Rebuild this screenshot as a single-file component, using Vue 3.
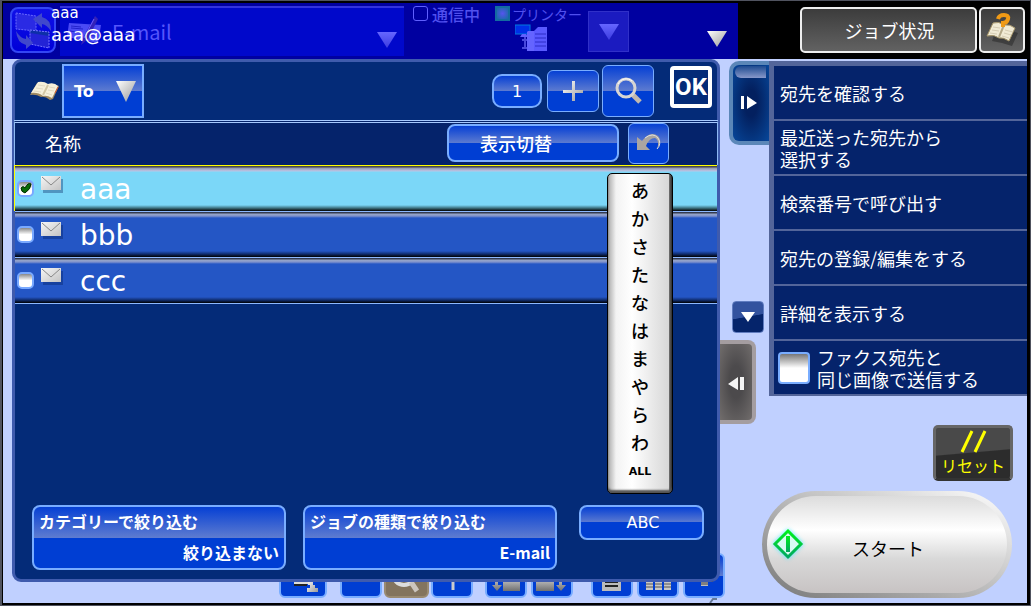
<script setup>
import { ref } from 'vue'

const addresses = ref([
  { name: 'aaa', checked: true },
  { name: 'bbb', checked: false },
  { name: 'ccc', checked: false },
])
const indexKeys = ['あ', 'か', 'さ', 'た', 'な', 'は', 'ま', 'や', 'ら', 'わ', 'ALL']
const actions = [
  ['宛先を確認する'],
  ['最近送った宛先から', '選択する'],
  ['検索番号で呼び出す'],
  ['宛先の登録/編集をする'],
  ['詳細を表示する'],
]
const sameImage = ref(false)
</script>

<template>
  <div class="screen">
    <svg class="defs" width="0" height="0" aria-hidden="true">
      <defs>
        <linearGradient id="silver" x1="0" y1="0" x2="1" y2="1">
          <stop offset="0" stop-color="#fff" /><stop offset="1" stop-color="#999" />
        </linearGradient>
        <linearGradient id="steel" x1="0" y1="0" x2="0" y2="1">
          <stop offset="0" stop-color="#c4c4c4" /><stop offset="1" stop-color="#707070" />
        </linearGradient>
        <linearGradient id="violet" x1="0" y1="0" x2="0" y2="1">
          <stop offset="0" stop-color="#6666ff" /><stop offset="1" stop-color="#3c3ce0" />
        </linearGradient>
        <linearGradient id="leaf" x1="0" y1="0" x2="0" y2="1">
          <stop offset="0" stop-color="#00f01c" /><stop offset="1" stop-color="#00a860" />
        </linearGradient>
      </defs>
    </svg>

    <header class="top">
      <div class="dest">
        <button class="swap" aria-label="切替">
          <svg width="42" height="42" viewBox="0 0 42 42">
            <path d="M4 4l20 3v15L4 20z" fill="#2a2ae4" />
            <path d="M4 4l20 3v15L4 20z" fill="none" stroke="#6a6aff" stroke-dasharray="2 1" />
            <path d="M18 21l19 2v16l-19-4z" fill="#2323d6" />
            <path d="M18 21l19 2v4l-19-3z" fill="#0d2fa8" />
            <path d="M18 21l19 2v16l-19-4z" fill="none" stroke="#7a7aff" stroke-dasharray="2 1" />
            <path d="M21 10l9-6v4q9 2 9 14q-4-6-9-7v4z" fill="#4048cc" />
            <path d="M4 22q4 7 10 8v-4l7 8l-7 6v-4Q5 34 4 22z" fill="#4048cc" />
          </svg>
        </button>
        <button class="mail-card">
          <svg width="36" height="34" viewBox="0 0 36 34">
            <path d="M2 8l32 2l-3 18l-31-6z" fill="#4a4af4" />
            <path d="M4 11l10 1M4 13l12 1M3 16l12 2M20 20l8 1" stroke="#2222cc" />
            <path d="M28 1L17 21l-3 9l7-6L31 4z" fill="#3422b8" /><path d="M27 4L17 23" stroke="#6a5aff" />
          </svg>
          <span>E-mail</span>
          <svg class="card-arrow" width="20" height="16"><path d="M0 0h20L10 16z" fill="url(#violet)" /></svg>
        </button>
        <div class="status">
          <div class="lamps">
            <span class="lamp"></span><span class="comm">通信中</span>
            <span class="lamp on"></span><span class="printer">プリンター</span>
          </div>
          <svg class="printer-icon" width="32" height="28" viewBox="0 0 32 28">
            <rect x="0" y="1" width="15" height="9" fill="#002fe8" stroke="#007bdd" />
            <path d="M5 13h8l-2-3H7z" fill="#6060ff" />
            <path d="M7 16h6M7 24h6M10 13v11" stroke="#4848dc" stroke-width="2" />
            <path d="M13 7h6v20h-7V8z" fill="#6464ff" />
            <path d="M19 7l4-4h9v24H19z" fill="#5959ff" />
            <path d="M20 10h11M20 14h11M20 18h11M20 22h11" stroke="#2c2cc8" />
          </svg>
          <button class="status-menu" aria-label="プリンター一覧">
            <svg width="20" height="16"><path d="M0 0h20L10 16z" fill="url(#violet)" /></svg>
          </button>
          <svg class="open-arrow" width="20" height="16"><path d="M0 0h20L10 16z" fill="url(#silver)" /></svg>
        </div>
        <div class="current"><span>aaa</span><strong>aaa@aaa</strong></div>
      </div>
      <div class="job">
        <button class="job-status">ジョブ状況</button>
        <button class="help" aria-label="ヘルプ">
          <svg width="36" height="36" viewBox="0 0 36 36">
            <path d="M8 29l5-13l9 1l12 4l-6 13l-10-3z" fill="#171717" opacity=".4" />
            <path d="M3 24L9 11q6-2 11 2q6-1 11 3l-6 13q-6-4-10-3q-5-4-12-2z" fill="#f1ebd5" stroke="#a49469" />
            <path d="M20 13l-5 12" stroke="#b4a989" stroke-width="2" />
            <path d="M9 15l7 1M8 18l7 1M6 21l7 1M21 18l8 2M20 21l7 2M18 24l7 2" stroke="#d6cdb4" />
            <path d="M14 7q1-4 6-4q5 0 4 4q-1 4-5 4v4" fill="none" stroke="#f09a15" stroke-width="4" />
          </svg>
        </button>
      </div>
    </header>

    <div class="body">
      <main class="left">
        <section class="panel">
          <div class="tools">
            <svg class="book" width="30" height="20" viewBox="0 0 30 20">
              <path d="M0 14L7 2q7-1 10 2q6-2 12 1l-6 13l-3 1q-5-4-9-3q-5-3-11-2z" fill="#a08a62" />
              <path d="M1 12L8 1q6-1 10 2q6-2 10 2l-6 12q-5-3-9-2q-5-4-12-3z" fill="#f6f0da" />
              <path d="M18 4l-5 10" stroke="#d3c7a4" stroke-width="2" />
              <path d="M8 4l7 1M6 7l7 1M4 10l7 1M19 6l6 1M18 9l6 1M16 12l6 2" stroke="#e2dac2" />
              <path d="M28 6l-3 6" stroke="#da5b2d" />
            </svg>
            <button class="key to">To
              <svg width="20" height="21"><path d="M0 0h20L10 21z" fill="url(#silver)" /></svg>
            </button>
            <span class="spacer"></span>
            <button class="key count">1</button>
            <button class="key plus" aria-label="追加">
              <svg width="20" height="20"><path d="M9 0h3v9h8v3h-8v8H9v-8H0V9h9z" fill="url(#silver)" /></svg>
            </button>
            <button class="key search" aria-label="検索">
              <svg width="28" height="28" viewBox="0 0 28 28">
                <path d="M18 17l8 8" stroke="#c2b9ae" stroke-width="5" />
                <circle cx="12" cy="11" r="9" fill="none" stroke="#d7d5d3" stroke-width="3" />
                <path d="M4 7a9 9 0 0 1 14-3" fill="none" stroke="#fff" />
              </svg>
            </button>
            <button class="ok">OK</button>
          </div>

          <div class="list-head">
            <span>名称</span>
            <button class="key view">表示切替</button>
            <button class="key undo" aria-label="戻す">
              <svg width="24" height="20" viewBox="0 0 24 20">
                <path d="M0 4v13h13l-4-4q3-8 9-8q5 3 2 11q6-8 1-13q-8-6-16 5z" fill="#aaa5a1" />
                <path d="M8 5q8-6 13 0q4 6-1 11" fill="none" stroke="#ddd" />
              </svg>
            </button>
          </div>

          <ul class="rows">
            <li v-for="a in addresses" :key="a.name" :class="{ chosen: a.checked }">
              <label>
                <span class="tick">
                  <input v-model="a.checked" type="checkbox" />
                  <svg v-if="a.checked" width="12" height="12" viewBox="0 0 12 12">
                    <path d="M1 6q2-3 4 0q3-6 6-4q0 5-6 9q-4-1-4-5z" fill="#086b08" stroke="#012c01" />
                  </svg>
                </span>
                <svg class="envelope" width="22" height="18" viewBox="0 0 22 18">
                  <path d="M2 3h20v14H2z" fill="#001b58" opacity=".35" />
                  <path d="M0 0h20v14H0z" fill="url(#silver)" />
                  <path d="M0 0h20v14H0z" fill="#eee" opacity=".5" />
                  <path d="M1 1l9 8l9-8" fill="none" stroke="#888" />
                </svg>
                <span class="name">{{ a.name }}</span>
              </label>
            </li>
          </ul>

          <div class="filters">
            <button class="key filter"><span>カテゴリーで絞り込む</span><span class="value">絞り込まない</span></button>
            <button class="key filter"><span>ジョブの種類で絞り込む</span><span class="value">E-mail</span></button>
            <button class="key abc">ABC</button>
          </div>

          <div class="index">
            <button v-for="k in indexKeys" :key="k" :class="{ all: k === 'ALL' }">{{ k }}</button>
          </div>
        </section>

        <div class="dock">
          <button class="key w48" aria-label="宛先"><svg width="48" height="45"><path d="M15 26h14v5H15z" fill="#ddd" /><path d="M29 26h5v6h2v3h3v4H28v-4h3v-3h-2z" fill="url(#silver)" /><path d="M15 32h13" stroke="#222" stroke-width="2" /></svg></button>
          <button class="key first" aria-label="リスト"></button>
          <button class="key brown" aria-label="宛先検索"><svg width="45" height="45"><circle cx="20" cy="21" r="11" fill="none" stroke="#ddd" stroke-width="4" /><path d="M27 29l6 9" stroke="#ccc5bd" stroke-width="5" /></svg></button>
          <button class="key" aria-label="追加"><svg width="42" height="45"><path d="M22 15v22" stroke="#ccc" stroke-width="3" /></svg></button>
          <button class="key second" aria-label="下へ"><svg width="42" height="45"><path d="M10 26h3v6h4l-5 6l-5-6h3zM18 26h17v12H18z" fill="url(#steel)" /></svg></button>
          <button class="key narrow" aria-label="前へ"><svg width="42" height="45"><path d="M5 26h18v12H5zM28 26h3v6h4l-5 6l-5-6h3z" fill="url(#steel)" /></svg></button>
          <button class="key third" aria-label="文書"><svg width="42" height="45"><path d="M11 20h19v18H11z" fill="#bbb" /><path d="M14 29h13M14 33h13" stroke="#222" stroke-width="2" /></svg></button>
          <button class="key" aria-label="一覧"><svg width="42" height="45"><path d="M9 25h7v12H9zM18 25h7v12h-7zM27 25h7v12h-7z" fill="#c7c7c7" /><path d="M9 28h7M9 31h7M9 34h7M18 28h7M18 31h7M18 34h7M27 28h7M27 31h7M27 34h7" stroke="#555" /></svg></button>
          <button class="key" aria-label="出力"><svg width="42" height="45"><path d="M12 26h18v3H12z" fill="#444" /><path d="M18 26h7v7h-7z" fill="#bbb" /><path d="M18 29h7M18 31h7" stroke="#444" /></svg></button>
        </div>
        <svg class="scratch" width="8" height="5"><path d="M1 5l3-4h4" fill="none" stroke="#657897" stroke-width="2" /></svg>
      </main>

      <aside class="right">
        <div class="side">
          <div class="handles">
            <button class="tab" aria-label="メニューを閉じる">
              <svg width="16" height="14"><path d="M0 0h3v13H0zM6 0l10 7l-10 6z" fill="#fff" /></svg>
            </button>
            <button class="drop" aria-label="開く"><svg width="14" height="10"><path d="M0 0h14L7 10z" fill="#fff" /></svg></button>
            <button class="grip" aria-label="パネルを閉じる">
              <svg width="16" height="14"><path d="M10 0v13L0 7zM12 0h4v13h-4z" fill="#f4f4f4" /></svg>
            </button>
          </div>
          <nav class="menu">
            <button v-for="a in actions" :key="a[0]">
              <span v-for="line in a" :key="line">{{ line }}</span>
            </button>
            <label class="fax">
              <input v-model="sameImage" type="checkbox" />
              <span>ファクス宛先と<br />同じ画像で送信する</span>
            </label>
          </nav>
        </div>
        <button class="reset">
          <svg width="28" height="24"><path d="M3 22L13 1M16 22L26 1" stroke="#ff0" stroke-width="3" /></svg>
          <span>リセット</span>
        </button>
        <button class="start">
          <svg width="32" height="32" viewBox="0 0 32 32">
            <path d="M16 3l13 13l-13 13L3 16z" fill="#d9fbf4" stroke="url(#leaf)" stroke-width="3" />
            <path d="M14 8h4v16h-4z" fill="url(#leaf)" />
          </svg>
          <span>スタート</span>
        </button>
      </aside>
    </div>
  </div>
</template>

<style>
body { background: #000; }
</style>

<style scoped>
* { box-sizing: border-box; }
svg { display: block; flex: none; }
.defs { position: absolute; }
button { font: inherit; color: inherit; margin: 0; padding: 0; border: 0; background: none; display: flex; align-items: center; justify-content: center; flex: none; }
input { appearance: none; margin: 0; flex: none; }

.screen {
  min-height: 100vh; display: flex; flex-direction: column;
  border: 1px solid #50535f; border-left-width: 2px;
  padding: 2px 3px 2px 1px; background: #000; color: #fff;
  font: 18px/22px "Noto Sans CJK JP", "Noto Sans", sans-serif;
}
.top { display: grid; grid-template-columns: minmax(0, 1fr) 289px; height: 56px; }
.dest { position: relative; display: flex; background: #0000a0; padding: 3px 0 3px 7px; }
.swap { width: 46px; height: 46px; margin: 1px 4px 0 0; border: 2px solid #3346f4; border-radius: 8px; background: linear-gradient(#1010e8, #0000d8); }
.mail-card { flex: 1; justify-content: flex-start; gap: 9px; padding: 0 7px; border-top: 2px solid #3333dd; background: #0008cb; color: #5555fb; font-size: 20px; }
.card-arrow { margin: 16px 0 0 auto; }
.status { width: 334px; display: grid; grid-template-columns: 111px 73px 41px 1fr; grid-template-rows: 8px auto; color: #5050ee; }
.lamps { grid-row: 1; grid-column: 1 / 3; display: flex; align-items: center; height: 15px; padding-left: 9px; }
.lamp { width: 15px; height: 15px; border: 1px solid #6060ff; border-radius: 3px; margin-right: 4px; }
.lamp.on { margin: 0 2px 0 15px; border: 2px solid #146ba0; border-radius: 0; background: radial-gradient(#5555ee, #166ba3); }
.comm { font-size: 16px; font-weight: 500; white-space: nowrap; }
.printer { font-size: 14px; white-space: nowrap; }
.printer-icon { grid-row: 2; grid-column: 1; justify-self: end; margin: 10px -32px 0 0; }
.status-menu { grid-row: 1 / 3; grid-column: 3; width: 41px; height: 41px; margin-top: 5px; border: 1px solid #3030c8; background: #1b1bc0; }
.open-arrow { grid-row: 1 / 3; grid-column: 4; justify-self: end; margin: 25px 11px 0 0; }
.current { position: absolute; left: 48px; top: 0; display: flex; flex-direction: column; font: 15px/20px "DejaVu Sans", sans-serif; color: #fff; }
.current strong { font-size: 18px; line-height: 24px; font-weight: 400; }
.job { display: flex; justify-content: flex-end; gap: 2px; padding: 4px 2px 0 0; }
.job button { height: 46px; border: 2px solid #eee; border-radius: 5px; background: linear-gradient(#3c3c3c, #626262); }
.job .job-status { width: 177px; padding-left: 2px; }
.help { width: 46px; }

.body { flex: 1; display: grid; grid-template-columns: minmax(0, 1fr) 307px; background: #c0d0ff; }
.left { position: relative; display: flex; flex-direction: column; padding-left: 9px; }
.panel { position: relative; z-index: 1; flex: 1; display: flex; flex-direction: column; border: 3px solid #3f5bad; border-radius: 9px; background: #042b78; }
.tools { display: flex; align-items: center; height: 58px; padding-right: 5px; }
.book { margin: 0 2px 0 15px; }
.spacer { flex: 1; }
.key { border: 1px solid #79adff; border-radius: 6px; background: linear-gradient(#0640d4, #5d7bd0 50%, #003ed3 50%); }
.to { width: 82px; height: 54px; border-width: 2px; border-radius: 0; justify-content: space-between; padding: 0 6px 0 10px; font: bold 16px "DejaVu Sans", sans-serif; }
.count { width: 50px; height: 34px; border-width: 2px; border-radius: 10px; margin-right: 5px; font: 16px "DejaVu Sans", sans-serif; }
.plus { width: 52px; height: 42px; margin-right: 3px; }
.search { width: 52px; height: 52px; margin-right: 16px; }
.ok { width: 42px; height: 42px; margin-bottom: 8px; border: 4px solid #fff; border-radius: 4px; font: bold 24px "Roboto", sans-serif; }
.list-head { display: flex; align-items: center; height: 45px; margin: 0 -1px; border: 1px solid #8fb9f4; border-top: 3px double #a7c9ff; border-bottom: 0; background: #05236b; padding: 0 48px 2px 30px; }
.list-head span { margin-right: auto; }
.view { width: 172px; height: 38px; border-width: 2px; border-radius: 8px; padding-right: 34px; margin-right: 9px; font-weight: 500; }
.undo { width: 41px; height: 41px; }
.rows { flex: 1; min-height: 340px; margin: 0; padding: 0; list-style: none; }
.rows li { height: 46px; border-top: 1px solid #8cb8ff; background: linear-gradient(#333a50 0 1px, #97a6c8 2px, #8193cc 4px, #2456c5 6px, #2456c5 39px, #102d70 42px, #000 45px); }
.rows li:last-child { height: 47px; border-bottom: 1px solid #8cb8ff; }
.rows li.chosen { border-top-color: #ff0; box-shadow: -1px 0 #ff0; background: linear-gradient(#484848 0 1px, #8e94b0 2px, #bdc5e4 5px, #7bd7f8 6px, #7bd7f8 39px, #3e7584 42px, #000 45px); }
.rows label { display: flex; align-items: flex-start; height: 44px; }
.tick { position: relative; margin: 14px 7px 0 2px; }
.tick input { display: block; width: 17px; height: 17px; border: 2px solid #79a9ff; border-radius: 5px; background: linear-gradient(#888, #fff 50%); }
.tick svg { position: absolute; left: 3px; top: 2px; }
.envelope { margin-top: 10px; }
.name { margin: 8px 0 0 17px; font: 28px/32px "DejaVu Sans", sans-serif; }
.filters { display: flex; align-items: flex-start; padding: 0 13px 9px 17px; }
.filter { flex: 1; height: 65px; margin-right: 17px; border-width: 2px; border-radius: 8px; flex-direction: column; align-items: stretch; justify-content: space-between; padding: 3px 5px 5px; text-align: left; font-size: 16px; font-weight: bold; }
.filter:nth-child(2) { margin-right: 22px; }
.filter .value { text-align: right; }
.abc { width: 125px; height: 35px; padding-left: 3px; border-width: 2px; border-radius: 8px; font: 16px "DejaVu Sans", sans-serif; }
.index { position: absolute; right: 44px; top: 111px; width: 66px; display: flex; flex-direction: column; padding: 2px 0 9px; border: 1px solid #000; border-radius: 5px; color: #000; background: linear-gradient(90deg, transparent 61px, #777 61px, #222), linear-gradient(90deg, #aaa, #f3f3f3 8px, #fff 24px, #d8d8d8 60px); box-shadow: inset 0 -3px 2px #555; }
.index button { height: 28px; font-weight: 500; }
.index .all { padding-top: 2px; font: bold 11px "DejaVu Sans", sans-serif; }
.dock { display: flex; justify-content: flex-end; gap: 4px; height: 45px; margin: -29px -5px 5px 0; }
.dock .key { width: 42px; height: 45px; border-width: 2px; }
.dock .w48 { width: 48px; margin-right: 9px; }
.dock .narrow { margin-right: 14px; }
.dock .brown { width: 45px; margin: 0 -2px; border-color: #9a8b72; background: #83745e; }
.dock .second { margin-left: 8px; }
.scratch { position: absolute; right: 3px; bottom: 0; }

.right { display: flex; flex-direction: column; align-items: flex-end; }
.side { align-self: stretch; display: flex; align-items: flex-start; }
.handles { width: 49px; display: flex; flex-direction: column; padding-top: 2px; }
.tab { position: relative; width: 40px; height: 84px; margin-left: 9px; padding-right: 4px; border: 4px solid #5b87b8; border-right: 0; border-radius: 10px 0 0 10px; background: radial-gradient(#03205f 25%, #07479a); }
.tab::before { content: ""; position: absolute; left: 2px; right: 3px; top: 1px; height: 12px; border-radius: 6px 0 0 6px; background: linear-gradient(#1d4a90, #8898ca); }
.drop { width: 32px; height: 32px; margin: 156px 0 7px 12px; border: 1px solid #607cc0; border-radius: 4px; background: linear-gradient(170deg, #33529e 48%, #05246b 50%); }
.grip { width: 36px; height: 84px; padding-top: 4px; border: 4px solid #a49da0; border-left: 0; border-radius: 0 8px 8px 0; background: radial-gradient(#4c4a4c 30%, #716d6c); }
.menu { flex: 1; margin-top: 2px; border: solid #53659a; border-width: 5px 0 0 5px; background: #05236b; }
.menu button { width: 100%; height: 55px; padding: 0 6px; border-bottom: 2px solid #53659a; flex-direction: column; align-items: flex-start; }
.fax { display: flex; align-items: center; gap: 7px; height: 55px; padding-left: 4px; border-bottom: 2px solid #53659a; }
.fax input { width: 32px; height: 32px; border: 2px solid #79adff; border-radius: 4px; background: linear-gradient(#777, #fff 50%); }
.reset { width: 80px; height: 56px; margin: 1px 14px 10px 0; border: 3px solid #666; border-bottom-color: #333; border-radius: 5px; flex-direction: column; color: #ff0; font-size: 16px; background: linear-gradient(175deg, #494949 48%, #2c2c2c 50%); }
.start { position: relative; width: 250px; height: 107px; margin: 0 15px 5px 0; border: 5px solid transparent; border-radius: 54px; padding: 6px 0 0 2px; color: #000; background: linear-gradient(#dcdcdc, #fff 35%, #d8d8d8 65%, #c7c3c3) padding-box, linear-gradient(25deg, #777, #bbb 50%, #fff) border-box; }
.start svg { position: absolute; left: 5px; top: 32px; filter: drop-shadow(0 0 2px #4de8ff); }
</style>
